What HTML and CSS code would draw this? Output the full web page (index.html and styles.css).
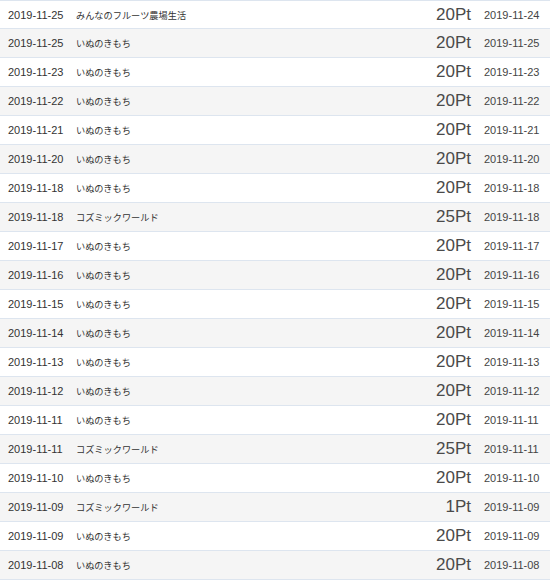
FILE: index.html
```html
<!DOCTYPE html>
<html lang="ja">
<head>
<meta charset="utf-8">
<link rel="stylesheet" href="styles.css">
</head>
<body>
<div class="list">
  <div class="row"><span class="date">2019-11-25</span><span class="title">みんなのフルーツ農場生活</span><span class="pt">20Pt</span><span class="end">2019-11-24</span></div>
  <div class="row"><span class="date">2019-11-25</span><span class="title">いぬのきもち</span><span class="pt">20Pt</span><span class="end">2019-11-25</span></div>
  <div class="row"><span class="date">2019-11-23</span><span class="title">いぬのきもち</span><span class="pt">20Pt</span><span class="end">2019-11-23</span></div>
  <div class="row"><span class="date">2019-11-22</span><span class="title">いぬのきもち</span><span class="pt">20Pt</span><span class="end">2019-11-22</span></div>
  <div class="row"><span class="date">2019-11-21</span><span class="title">いぬのきもち</span><span class="pt">20Pt</span><span class="end">2019-11-21</span></div>
  <div class="row"><span class="date">2019-11-20</span><span class="title">いぬのきもち</span><span class="pt">20Pt</span><span class="end">2019-11-20</span></div>
  <div class="row"><span class="date">2019-11-18</span><span class="title">いぬのきもち</span><span class="pt">20Pt</span><span class="end">2019-11-18</span></div>
  <div class="row"><span class="date">2019-11-18</span><span class="title">コズミックワールド</span><span class="pt">25Pt</span><span class="end">2019-11-18</span></div>
  <div class="row"><span class="date">2019-11-17</span><span class="title">いぬのきもち</span><span class="pt">20Pt</span><span class="end">2019-11-17</span></div>
  <div class="row"><span class="date">2019-11-16</span><span class="title">いぬのきもち</span><span class="pt">20Pt</span><span class="end">2019-11-16</span></div>
  <div class="row"><span class="date">2019-11-15</span><span class="title">いぬのきもち</span><span class="pt">20Pt</span><span class="end">2019-11-15</span></div>
  <div class="row"><span class="date">2019-11-14</span><span class="title">いぬのきもち</span><span class="pt">20Pt</span><span class="end">2019-11-14</span></div>
  <div class="row"><span class="date">2019-11-13</span><span class="title">いぬのきもち</span><span class="pt">20Pt</span><span class="end">2019-11-13</span></div>
  <div class="row"><span class="date">2019-11-12</span><span class="title">いぬのきもち</span><span class="pt">20Pt</span><span class="end">2019-11-12</span></div>
  <div class="row"><span class="date">2019-11-11</span><span class="title">いぬのきもち</span><span class="pt">20Pt</span><span class="end">2019-11-11</span></div>
  <div class="row"><span class="date">2019-11-11</span><span class="title">コズミックワールド</span><span class="pt">25Pt</span><span class="end">2019-11-11</span></div>
  <div class="row"><span class="date">2019-11-10</span><span class="title">いぬのきもち</span><span class="pt">20Pt</span><span class="end">2019-11-10</span></div>
  <div class="row"><span class="date">2019-11-09</span><span class="title">コズミックワールド</span><span class="pt">1Pt</span><span class="end">2019-11-09</span></div>
  <div class="row"><span class="date">2019-11-09</span><span class="title">いぬのきもち</span><span class="pt">20Pt</span><span class="end">2019-11-09</span></div>
  <div class="row"><span class="date">2019-11-08</span><span class="title">いぬのきもち</span><span class="pt">20Pt</span><span class="end">2019-11-08</span></div>
</div>
</body>
</html>
```
FILE: styles.css
```css
html, body {
  margin: 0;
  padding: 0;
  background: #ffffff;
}
body {
  font-family: "Liberation Sans", "Noto Sans CJK JP", sans-serif;
  color: #333333;
}
.list {
  border-top: 1px solid #dde5ef;
}
.row {
  display: grid;
  grid-template-columns: 68px 1fr auto 69px;
  align-items: center;
  height: 28px;
  border-bottom: 1px solid #dde5ef;
  padding-left: 8px;
  padding-right: 10px;
}
.row:first-child {
  height: 27px;
}
.row:nth-child(even) {
  background: #f5f5f5;
}
.date {
  font-size: 11px;
  color: #333333;
}
.title {
  font-size: 9.2px;
  color: #333333;
}
.pt {
  font-size: 17px;
  color: #4a4a4a;
  text-align: right;
}
.end {
  font-size: 11px;
  color: #444444;
  padding-left: 13px;
}
```
